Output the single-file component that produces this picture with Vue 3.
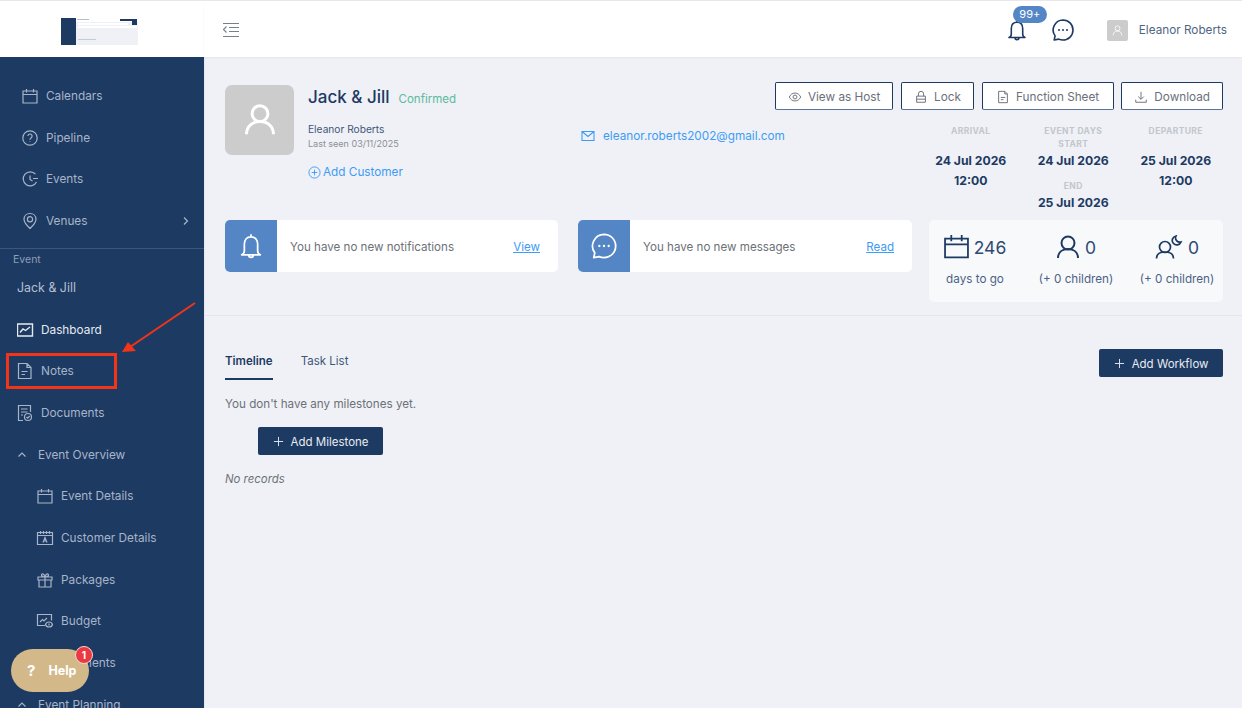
<script setup>
const topNav = [
  { label: 'Calendars', icon: 'cal' },
  { label: 'Pipeline', icon: 'help' },
  { label: 'Events', icon: 'clock' },
  { label: 'Venues', icon: 'pin', chevron: true },
]
const subNav = [
  { label: 'Event Details', icon: 'cal' },
  { label: 'Customer Details', icon: 'calA' },
  { label: 'Packages', icon: 'gift' },
  { label: 'Budget', icon: 'budget' },
  { label: 'Payments', icon: 'doc' },
]
const icons = {
  cal: 'M2 4h14v12H2zM2 7.500h14M5.500 2v3.500M12.500 2v3.500',
  help: 'M9 1.800a7.200 7.200 0 1 0 0 14.400A7.200 7.200 0 0 0 9 1.800zM6.900 7a2.100 2.100 0 1 1 3.200 1.900c-.8.500-1.100.900-1.100 1.800M9 12.600v.400',
  clock: 'M14.500 4.200A7 7 0 1 0 15.500 12M9 5.500V9.500l2.500 1.500M12 8.500h5',
  pin: 'M9 1.500c-3.500 0-6 2.500-6 5.800 0 3.600 3.400 6.800 6 9.200 2.600-2.400 6-5.600 6-9.200 0-3.300-2.500-5.800-6-5.800zM9 4.700a2.600 2.600 0 1 0 0 5.200 2.600 2.600 0 0 0 0-5.200z',
  calA: 'M1.500 3.500h15v12h-15zM1.500 6.500h15M4.500 2v3M7.500 2v3M10.500 2v3M13.500 2v3M7 13.500l2-5 2 5M7.800 12h2.400',
  gift: 'M2 6h14v3H2zM3 9h12v7H3zM9 6v10M9 6C7 6 5.500 5.400 5.500 4S7.800 1.800 9 6c1.200-4.200 3.500-3.400 3.500-2S11 6 9 6z',
  budget: 'M9 13.500H1.500v-11h14v6M4 10l2.500-2.500 1.500 1.500 3-3M13 10c-2 0-3.200 1.500-3.500 2.500.3 1 1.500 2.500 3.500 2.500s3.200-1.500 3.500-2.500c-.3-1-1.500-2.500-3.500-2.500zM13 11.500v2',
  doc: 'M1.500 1.500h8.500l4 4V16.500H1.500zM10 1.500v4h4M4.500 9.500h6M4.500 12.500h3.500',
}
const dates = [
  { head: 'ARRIVAL', lines: ['24 Jul 2026', '12:00'] },
  { head: 'DEPARTURE', lines: ['25 Jul 2026', '12:00'] },
]
</script>

<template>
  <div class="app">
    <aside class="side">
      <div class="logo">
        <svg class="thumb" width="77" height="27" viewBox="0 0 77 27">
          <rect width="77" height="27" fill="#eff1f6" />
          <rect y="0" x="15" width="62" height="4" fill="#fff" />
          <rect width="15" height="27" fill="#1d3a63" />
          <rect x="16" y="1" width="12" height="1" fill="#b8c0cf" />
          <rect x="59" y="1" width="17" height="2" fill="#1d3a63" />
          <rect x="71" y="3" width="5" height="4" fill="#1d3a63" />
          <rect x="17" y="5" width="50" height="2" fill="#fff" />
          <rect x="17" y="8" width="59" height="2" fill="#fff" />
          <rect x="17" y="21" width="18" height="1" fill="#c5cbd6" />
        </svg>
      </div>
      <nav class="nav">
        <div class="list top">
          <a v-for="n in topNav" :key="n.label" class="item">
            <svg class="ic" viewBox="0 0 18 18"><path :d="icons[n.icon]" /></svg>
            <span class="grow">{{ n.label }}</span>
            <svg v-if="n.chevron" class="chev" viewBox="0 0 8 10"><path d="M2 1.500 5.500 5 2 8.500" /></svg>
          </a>
        </div>
        <div class="sect">Event</div>
        <div class="evname">Jack &amp; Jill</div>
        <a class="item ev active">
          <svg class="ic" viewBox="0 0 18 18"><path d="M.500 3h15v12H.500zM3 11.500l3-3.500 2.500 1.500L13 6" /></svg>
          <span>Dashboard</span>
        </a>
        <a class="item ev">
          <svg class="ic" viewBox="0 0 18 18"><path :d="icons.doc" /></svg>
          <span>Notes</span>
        </a>
        <a class="item ev">
          <svg class="ic" viewBox="0 0 18 18"><path d="M13.500 8V1.500H1.500v15H6M4 5h6.500M4 8h6.500M4 11h2M11 9.500a3.500 3.500 0 1 0 0 7 3.500 3.500 0 0 0 0-7zM9.500 13l1.200 1.200L12.700 12" /></svg>
          <span>Documents</span>
        </a>
        <a class="item group">
          <svg class="fold" viewBox="0 0 10 8"><path d="M1.500 5.500 5 2l3.500 3.500" /></svg>
          <span>Event Overview</span>
        </a>
        <a v-for="n in subNav" :key="n.label" class="item sub">
          <svg class="ic" viewBox="0 0 18 18"><path :d="icons[n.icon]" /></svg>
          <span>{{ n.label }}</span>
        </a>
        <a class="item group">
          <svg class="fold" viewBox="0 0 10 8"><path d="M1.500 5.500 5 2l3.500 3.500" /></svg>
          <span>Event Planning</span>
        </a>
      </nav>
    </aside>

    <div class="main">
      <header class="head">
        <svg class="menu" viewBox="0 0 18 16"><path d="M1 1.500h16M7 5.500h10M7 9.500h10M1 14.500h16M4.500 4.500 1.500 7.500l3 3" /></svg>
        <div class="head-right">
          <div class="bell">
            <svg class="hicon" viewBox="0 0 24 24"><path d="M12 2.500v1.700M12 4.200c-3.800 0-5.700 2.800-5.700 6.300v5.500c0 1.700-1 3-2.300 3.500h16c-1.300-.5-2.300-1.800-2.300-3.500v-5.500c0-3.500-1.900-6.300-5.700-6.300zM10 19.500c0 3 4 3 4 0" /></svg>
            <span class="badge">99+</span>
          </div>
          <svg class="hicon chat" viewBox="0 0 24 24"><path d="M12 2a10 10 0 0 1 0 20c-1.600 0-3-.3-4.200-.9L3.200 22l.9-4.100A10 10 0 0 1 12 2z" /><path class="dots" d="M8 12h.01M12 12h.01M16 12h.01" /></svg>
          <div class="user">
            <div class="mini-av">
              <svg viewBox="0 0 24 24"><circle cx="12" cy="8" r="4.500" /><path d="M4 21c0-5 3.500-8 8-8s8 3 8 8" /></svg>
            </div>
            <span>Eleanor Roberts</span>
          </div>
        </div>
      </header>

      <section class="hero">
        <div class="who">
          <div class="avatar">
            <svg viewBox="0 0 24 24"><circle cx="12" cy="8" r="5" /><path d="M3.500 21c0-5 3.800-8 8.500-8s8.500 3 8.500 8" /></svg>
          </div>
          <div class="who-text">
            <div class="title"><h1>Jack &amp; Jill</h1><span class="status">Confirmed</span></div>
            <div class="owner">Eleanor Roberts</div>
            <div class="seen">Last seen 03/11/2025</div>
            <a class="add">
              <svg viewBox="0 0 14 14"><circle cx="7" cy="7" r="6" /><path d="M7 4v6M4 7h6" /></svg>
              Add Customer
            </a>
          </div>
        </div>

        <a class="email">
          <svg viewBox="0 0 14 12"><path d="M1 1.500h12v9H1zM1 1.500l6 5 6-5" /></svg>
          eleanor.roberts2002@gmail.com
        </a>

        <div class="right">
          <div class="btns">
            <button class="btn">
              <svg viewBox="0 0 16 16"><path d="M1.500 8c1.500-3 3.700-4.500 6.500-4.500s5 1.500 6.500 4.500c-1.500 3-3.700 4.500-6.500 4.500S3 11 1.500 8z" /><circle cx="8" cy="8" r="2.200" /></svg>
              View as Host
            </button>
            <button class="btn">
              <svg viewBox="0 0 16 16"><path d="M3 7h10v7H3zM5 7V4.500a3 3 0 0 1 6 0V7M3 10.500h10" /></svg>
              Lock
            </button>
            <button class="btn wide">
              <svg viewBox="0 0 16 16"><path d="M3 1.500h7L13 4.500v10H3zM10 1.500v3h3M5.500 8.500h5M5.500 11h3" /></svg>
              Function Sheet
            </button>
            <button class="btn">
              <svg viewBox="0 0 16 16"><path d="M8 2v8.500M4.800 7.500 8 10.700l3.200-3.200M2 11v3h12v-3" /></svg>
              Download
            </button>
          </div>
          <div class="dates">
            <div class="dcol">
              <div class="dhead">{{ dates[0].head }}</div>
              <div class="dgap"></div>
              <div v-for="l in dates[0].lines" :key="l" class="dval">{{ l }}</div>
            </div>
            <div class="dcol">
              <div class="dhead">EVENT DAYS</div>
              <div class="dhead">START</div>
              <div class="dval">24 Jul 2026</div>
              <div class="dhead endh">END</div>
              <div class="dval">25 Jul 2026</div>
            </div>
            <div class="dcol">
              <div class="dhead">{{ dates[1].head }}</div>
              <div class="dgap"></div>
              <div v-for="l in dates[1].lines" :key="l" class="dval">{{ l }}</div>
            </div>
          </div>
        </div>

        <div class="notice">
          <div class="nicon">
            <svg viewBox="0 0 24 24"><path d="M12 2.500v1.700M12 4.200c-3.800 0-5.700 2.800-5.700 6.300v5.500c0 1.700-1 3-2.300 3.500h16c-1.300-.5-2.300-1.800-2.300-3.500v-5.500c0-3.500-1.900-6.300-5.700-6.300zM10 19.500c0 3 4 3 4 0" /></svg>
          </div>
          <span class="ntext">You have no new notifications</span>
          <a class="nlink">View</a>
        </div>
        <div class="notice">
          <div class="nicon">
            <svg viewBox="0 0 24 24"><path d="M12 2a10 10 0 0 1 0 20c-1.600 0-3-.3-4.200-.9L3.200 22l.9-4.100A10 10 0 0 1 12 2z" /><path class="dots" d="M8 12h.01M12 12h.01M16 12h.01" /></svg>
          </div>
          <span class="ntext">You have no new messages</span>
          <a class="nlink">Read</a>
        </div>
        <div class="stats">
          <div class="stat">
            <div class="snum">
              <svg class="s-cal" viewBox="0 0 24 24"><path d="M1 4.500h22v18H1zM1 10h22M7 1v6M17 1v6" /></svg>
              246
            </div>
            <div class="slabel">days to go</div>
          </div>
          <div class="stat">
            <div class="snum">
              <svg class="s-user" viewBox="0 0 24 24"><circle cx="12" cy="8" r="6.500" /><path d="M2 23c0-5.500 4-9 10-9s10 3.500 10 9" /></svg>
              0
            </div>
            <div class="slabel">(+ 0 children)</div>
          </div>
          <div class="stat">
            <div class="snum">
              <svg class="s-night" viewBox="0 0 28 24"><circle cx="10" cy="12" r="5.500" /><path d="M1.500 23.500c0-4.500 3.500-6.500 8.500-6.500s8.500 2 8.500 6.500M21 1a4.500 4.500 0 1 0 5 6 4.300 4.300 0 0 1-5-6z" /></svg>
              0
            </div>
            <div class="slabel">(+ 0 children)</div>
          </div>
        </div>
      </section>

      <section class="lower">
        <div class="tabbar">
          <div class="tabs">
            <a class="tab on">Timeline</a>
            <a class="tab">Task List</a>
          </div>
          <button class="primary">
            <svg viewBox="0 0 12 12"><path d="M6 1v10M1 6h10" /></svg>
            Add Workflow
          </button>
        </div>
        <p class="none">You don't have any milestones yet.</p>
        <button class="primary milestone">
          <svg viewBox="0 0 12 12"><path d="M6 1v10M1 6h10" /></svg>
          Add Milestone
        </button>
        <p class="records">No records</p>
      </section>
    </div>

    <svg class="arrow" viewBox="0 0 100 70" width="100" height="70">
      <path d="M77 3 12 47" />
      <path class="head-fill" d="M4 52 10 42 18 51z" />
    </svg>
    <div class="redbox"></div>

    <button class="helpbtn">
      <span class="q">?</span>
      <span>Help</span>
      <span class="hbadge">1</span>
    </button>
  </div>
</template>

<style>
html, body { margin: 0; background: #eff1f6; overflow: hidden; }
</style>

<style scoped>
.app {
  position: relative;
  display: flex;
  height: 708px;
  width: 1242px;
  overflow: hidden;
  font-family: Inter, "Liberation Sans", sans-serif;
  background: #eff1f6;
  border-top: 1px solid #e8e8e8;
  box-sizing: border-box;
}
.side { width: 204px; flex: none; display: flex; flex-direction: column; border-right: 1px solid #e6e8ee; margin-right: -1px; }
.logo { height: 56px; background: #fff; display: flex; justify-content: center; align-items: flex-start; padding: 17px 5px 0 0; box-sizing: border-box; flex: none; }
.thumb { filter: blur(.4px); }
.nav { flex: 1; background: #1d3a63; overflow: hidden; }
.list.top { padding: 18px 0 6px; border-bottom: 1px solid #3b5680; }
.item { display: flex; align-items: center; gap: 7px; height: 41.7px; padding: 0 12px 0 21px; font-size: 11.8px; color: #a8b5c8; }
.grow { flex: 1; }
.ic { width: 18px; height: 18px; flex: none; fill: none; stroke: #a8b5c8; stroke-width: 1.200; }
.chev { width: 8px; height: 10px; fill: none; stroke: #a8b5c8; stroke-width: 1.200; margin-right: 2px; }
.sect { font-size: 10.5px; color: #8d9db5; padding: 4px 0 0 13px; line-height: 13px; }
.evname { font-size: 12.4px; color: #b4bfd0; padding: 0 0 0 17px; line-height: 16px; margin-top: 14px; margin-bottom: 13px; }
.item.ev { padding-left: 17px; gap: 6px; }
.item.active { color: #e6eaf0; }
.item.active .ic { stroke: #e6eaf0; stroke-width: 1.400; }
.item.group { padding-left: 17px; gap: 11px; }
.fold { width: 10px; height: 8px; flex: none; fill: none; stroke: #a8b5c8; stroke-width: 1.100; }
.item.sub { padding-left: 36px; }

.main { flex: 1; min-width: 0; display: flex; flex-direction: column; }
.head { height: 56px; flex: none; background: #fff; display: flex; align-items: center; justify-content: space-between; padding: 2px 15px 0 18px; box-sizing: border-box; box-shadow: 0 1px 2px rgba(0,0,0,.05); }
.menu { width: 18px; height: 16px; fill: none; stroke: #75808f; stroke-width: 1.100; }
.head-right { display: flex; align-items: center; }
.hicon { width: 24px; height: 24px; fill: none; stroke: #1d3a63; stroke-width: 1.600; stroke-linecap: round; stroke-linejoin: round; }
.dots { stroke-width: 2; }
.bell { position: relative; height: 24px; }
.badge { position: absolute; left: 8px; top: -12px; background: #5486c6; color: #fff; border-radius: 9px; font-size: 11px; line-height: 17px; width: 34px; text-align: center; }
.chat { margin-left: 22px; margin-right: 32px; }
.user { display: flex; align-items: center; gap: 11px; font-size: 11.75px; color: #4f6584; }
.mini-av { width: 21px; height: 21px; background: #cccccc; border-radius: 2px; display: flex; align-items: center; justify-content: center; }
.mini-av svg { width: 13px; height: 13px; fill: none; stroke: #fff; stroke-width: 1.500; }

.hero { display: grid; grid-template-columns: 333px 334px 291px; column-gap: 20px; grid-template-rows: 135px 52px; padding: 28px 19px 43px 21px; border-bottom: 1px solid #e4e6ec; }
.who { display: flex; gap: 14px; grid-column: 1; grid-row: 1; }
.avatar { width: 69px; height: 70px; background: #cccccc; border-radius: 7px; display: flex; align-items: center; justify-content: center; flex: none; }
.avatar svg { width: 38px; height: 38px; fill: none; stroke: #fff; stroke-width: 1.900; }
.who-text { flex: 1; }
.title { display: flex; align-items: baseline; gap: 9px; margin-top: 1px; }
h1 { margin: 0; font-size: 17px; font-weight: 500; line-height: 22px; color: #1d3a63; }
.status { color: #5cba9c; font-size: 11.5px; padding-top: 1px; }
.owner { font-size: 10.2px; color: #3f5678; margin-top: 14px; line-height: 14px; }
.seen { font-size: 9px; color: #8b8f96; margin-top: 2px; line-height: 12px; }
.add { display: flex; align-items: center; gap: 2px; color: #3d9cf5; font-size: 11.75px; margin-top: 14px; line-height: 16px; }
.add svg { width: 13px; height: 13px; fill: none; stroke: #3d9cf5; stroke-width: 1; }
.email { grid-column: 2; grid-row: 1; display: flex; align-items: center; gap: 8px; height: 16px; margin: 43px 0 0 3px; color: #3d9cf5; font-size: 11.75px; }
.email svg { width: 14px; height: 12px; fill: none; stroke: #3d9cf5; stroke-width: 1.100; }
.right { grid-column: 3; grid-row: 1; margin-left: -3px; }
.btns { display: flex; justify-content: flex-end; gap: 7.67px; margin-left: -160px; margin-top: -3px; }
.btn { height: 28px; display: flex; align-items: center; gap: 6px; padding: 1px 12px 0; white-space: nowrap; background: #fff; border: 1px solid #1d3a63; border-bottom-color: #5a7498; border-radius: 2px; font: 400 11.75px Inter, "Liberation Sans", sans-serif; color: #6b7079; box-sizing: border-box; }
.btn.wide { padding: 1px 13.5px 0; }
.btn svg { width: 14px; height: 14px; fill: none; stroke: #6b7079; stroke-width: 1.100; }
.dates { display: grid; grid-template-columns: repeat(3, 102.5px); margin: 15px 0 0 -9.5px; text-align: center; }
.dhead { font-size: 8.5px; font-weight: 700; letter-spacing: .4px; color: #c3c6cc; line-height: 13px; }
.dgap { height: 13px; }
.dval { font-size: 12.2px; font-weight: 700; color: #1d3a63; line-height: 19.5px; }
.endh { margin-top: 9px; }

.notice { background: #fff; border-radius: 5px; display: flex; align-items: center; height: 52px; overflow: hidden; padding-right: 18px; grid-row: 2; }
.nicon { width: 52px; height: 52px; background: #5486c6; flex: none; display: flex; align-items: center; justify-content: center; margin-right: 13px; }
.nicon svg { width: 28px; height: 28px; fill: none; stroke: #fff; stroke-width: 1.500; stroke-linecap: round; stroke-linejoin: round; }
.nicon .dots { stroke-width: 2; }
.ntext { flex: 1; font-size: 11.6px; color: #6d7178; padding-top: 1px; }
.nlink { color: #3d9cf5; text-decoration: underline; font-size: 11.6px; padding-top: 1px; }
.stats { grid-row: 2; grid-column: 3; height: 82px; margin-left: -3px; background: #f8f9fb; border-radius: 5px; display: grid; grid-template-columns: repeat(3, 101px); justify-content: center; box-sizing: border-box; padding-top: 12px; }
.stat { display: flex; flex-direction: column; align-items: center; color: #1d3a63; }
.snum { display: flex; align-items: center; gap: 5px; font-size: 17.5px; height: 30px; color: #2d4a72; }
.s-cal { width: 25px; height: 25px; margin-top: -1px; fill: none; stroke: #1d3a63; stroke-width: 1.700; }
.s-user { width: 24px; height: 24px; margin-top: -1px; fill: none; stroke: #1d3a63; stroke-width: 2; }
.s-night { width: 28px; height: 24px; margin-top: -1px; fill: none; stroke: #1d3a63; stroke-width: 1.700; }
.slabel { font-size: 11.7px; color: #4c6285; margin-top: 10px; line-height: 15px; }

.lower { padding: 33px 19px 0 21px; }
.tabbar { display: flex; justify-content: space-between; align-items: flex-start; }
.tabs { display: flex; gap: 28px; }
.tab { font-size: 11.5px; color: #3f5678; height: 31px; line-height: 24px; box-sizing: border-box; }
.tab.on { font-weight: 600; color: #1d3a63; border-bottom: 2px solid #1d3a63; }
.primary { height: 28px; display: flex; align-items: center; gap: 7px; padding: 1px 14.5px 0; white-space: nowrap; background: #1d3a63; color: #e8ecf2; border: 0; border-radius: 2px; font: 400 11.5px Inter, "Liberation Sans", sans-serif; }
.primary svg { width: 11px; height: 11px; fill: none; stroke: #e8ecf2; stroke-width: 1; }
.none { margin: 17px 0 0; font-size: 11.65px; color: #6d7178; line-height: 15px; }
.milestone { margin: 15px 0 0 33px; }
.records { margin: 17px 0 0; font-size: 11.4px; font-style: italic; color: #6d7178; line-height: 15px; }

.arrow { position: absolute; left: 118px; top: 299px; overflow: visible; }
.arrow path { fill: none; stroke: #f23418; stroke-width: 2; }
.arrow .head-fill { fill: #f23418; stroke: none; }
.redbox { position: absolute; left: 6px; top: 352px; width: 111px; height: 36px; border: 3px solid #f23418; box-sizing: border-box; }

.helpbtn { position: absolute; left: 11px; top: 648px; width: 78px; height: 43px; border-radius: 22px; border: 0; background: #d3b98a; color: #fff; font: 700 12.5px Inter, "Liberation Sans", sans-serif; display: flex; align-items: center; gap: 13px; padding: 0 0 0 16px; box-sizing: border-box; }
.q { font-size: 15px; }
.hbadge { position: absolute; right: -4px; top: -3px; width: 16px; height: 16px; border-radius: 50%; background: #ea3a3f; border: 1px solid #f5d8d8; font-size: 10px; line-height: 16px; text-align: center; }
</style>
